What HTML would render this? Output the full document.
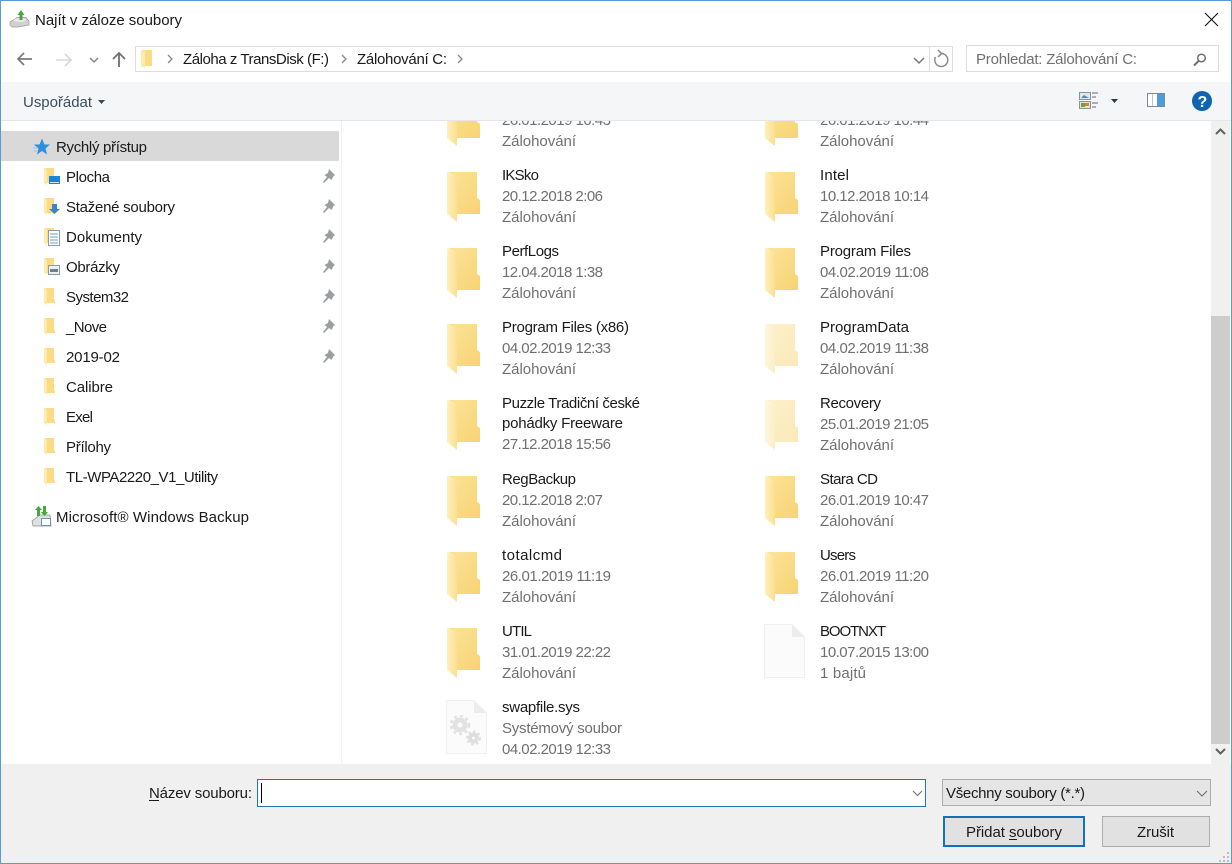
<!DOCTYPE html>
<html lang="cs"><head><meta charset="utf-8"><title>Najít v záloze soubory</title>
<style>
html,body{margin:0;padding:0;background:#fff;width:1232px;height:864px;overflow:hidden}
svg{display:block}
text{font-family:"Liberation Sans",sans-serif;font-size:15px;fill:#1a1a1a}
.g{fill:#707070}
</style></head><body>
<svg width="1232" height="864" viewBox="0 0 1232 864" xmlns="http://www.w3.org/2000/svg">
<defs>
<clipPath id="lst"><rect x="342" y="121" width="869" height="643"/></clipPath>
<linearGradient id="b" x1="0" y1="0" x2="1" y2="1"><stop offset="0" stop-color="#fce49a"/><stop offset="1" stop-color="#f7d374"/></linearGradient>
<linearGradient id="fl" x1="0" y1="0" x2="1" y2="0"><stop offset="0" stop-color="#fef0bd"/><stop offset="1" stop-color="#fbdf8f"/></linearGradient>
<g id="fo">
  <path d="M1 0H30V26L33 28V42H10V6Z" fill="url(#b)"/>
  <path d="M0 0L10 6V50L0 42Z" fill="url(#fl)"/>
</g>
<g id="fs">
  <path d="M1 0H10V12L11 13V15H3Z" fill="#fbdb84"/>
  <path d="M0 0L3 1V17L0 15Z" fill="#fdeaad"/>
</g>
<path id="pin" d="M8 0L14 6L12.500 7L10.500 11L8 9L3 14L2 13L6 8L3.500 6L7 4Z" fill="#9a9da1"/>
</defs>

<rect width="1232" height="864" fill="#fff"/>

<!-- title bar -->
<path d="M10 22L17 17.500H26L29 21V25L18 27H12L10 25Z" fill="#cfd1cf" stroke="#9a9c9a" stroke-width=".7"/>
<ellipse cx="20" cy="20" rx="6" ry="2" fill="#e8e9e8"/>
<path d="M19.500 20V15H17.500L21 10L24.500 15H22.500V20Z" fill="#4aa53f"/>
<text x="35" y="25" textLength="147">Najít v záloze soubory</text>
<path d="M1205 13L1218 26M1218 13L1205 26" stroke="#111" stroke-width="1.100" fill="none"/>

<!-- nav -->
<path d="M32 59H18M24 53L18 59L24 65" stroke="#7a7a7a" stroke-width="1.700" fill="none"/>
<path d="M56 60H71M65 54L71 60L65 66" stroke="#d8d8d8" stroke-width="1.600" fill="none"/>
<path d="M90 58L94 62L98 58" stroke="#888" stroke-width="1.500" fill="none"/>
<path d="M119 67V53M113 59L119 53L125 59" stroke="#707070" stroke-width="1.800" fill="none"/>

<!-- address -->
<rect x="135.500" y="46.500" width="817" height="25" fill="#fff" stroke="#dcdcdc"/>
<path d="M929.500 47V71" stroke="#dcdcdc"/>
<path d="M142 50H152V66H145Z" fill="#fbdb84"/><path d="M141 50L145 51V68L141 66Z" fill="#fdeaad"/>
<path d="M168 55L172 59L168 63" stroke="#888" stroke-width="1.300" fill="none"/>
<text x="183" y="64" textLength="146">Záloha z TransDisk (F:)</text>
<path d="M342 55L346 59L342 63" stroke="#888" stroke-width="1.300" fill="none"/>
<text x="357" y="64" textLength="90">Zálohování C:</text>
<path d="M458 55L462 59L458 63" stroke="#888" stroke-width="1.300" fill="none"/>
<path d="M914 58L919 63L924 58" stroke="#777" stroke-width="1.500" fill="none"/>
<path d="M941 53.500A6.500 6.500 0 1 1 935.500 57" stroke="#8a8a8a" stroke-width="1.500" fill="none"/>
<path d="M938 50L941.500 53.500L938 57" stroke="#8a8a8a" stroke-width="1.500" fill="none"/>

<!-- search -->
<rect x="966.500" y="45.500" width="252" height="26" fill="#fff" stroke="#dcdcdc"/>
<text x="976" y="64" textLength="161" class="g">Prohledat: Zálohování C:</text>
<circle cx="1201.500" cy="58" r="3.800" fill="none" stroke="#707070" stroke-width="1.500"/>
<path d="M1198.500 61L1194 65.500" stroke="#707070" stroke-width="2"/>

<!-- toolbar -->
<rect x="1" y="82" width="1230" height="38" fill="#f5f6f7"/>
<rect x="1" y="120" width="1230" height="1" fill="#e6e6e6"/>
<text x="23" y="107" textLength="69" style="fill:#3b4d63">Uspořádat</text>
<path d="M98 100H105L101.500 104Z" fill="#33475f"/>
<rect x="1079.500" y="92.500" width="11" height="7" fill="#dfe9f2" stroke="#8b9199"/>
<path d="M1081 98L1084 95L1089 98Z" fill="#5c86a8"/>
<rect x="1079.500" y="101.500" width="11" height="7" fill="#e8e6c0" stroke="#8b9199"/>
<path d="M1081 103H1085V107H1081Z" fill="#7d9a4c"/><path d="M1085 103H1089V106H1085Z" fill="#c68a3c"/>
<path d="M1092 93H1098M1092 97H1096M1092 103H1098M1092 107H1096" stroke="#667" stroke-width="1"/>
<path d="M1111 99H1118L1114.500 103Z" fill="#26384f"/>
<rect x="1147.500" y="93.500" width="17" height="13" fill="#fff" stroke="#7f8a95"/>
<rect x="1157" y="94" width="7" height="12" fill="#4a9be0"/>
<rect x="1152" y="94" width="1" height="12" fill="#b8c0c8"/>
<circle cx="1202" cy="101" r="10" fill="#0d65b1"/>
<text x="1197.500" y="107" style="fill:#fff;font-size:16px;font-weight:bold">?</text>

<!-- sidebar -->
<rect x="1" y="131" width="338" height="30" fill="#d9d9d9"/>
<rect x="341" y="121" width="1" height="643" fill="#f2f2f2"/>
<path d="M42 138.500L44.500 144.500H50L45.500 148.500L47 154.500L42 151L37 154.500L38.500 148.500L34 144.500H39.500Z" fill="#2f8fdf"/>
<path d="M33 148H37M34 151H37" stroke="#8cc4ee" stroke-width="1"/>
<text x="56" y="152" textLength="91">Rychlý přístup</text>

<use href="#fs" x="44" y="168"/>
<rect x="49" y="176" width="11" height="8" fill="#1a84d8"/><rect x="50" y="182" width="9" height="1" fill="#cfe6f8"/>
<text x="66" y="182" textLength="44">Plocha</text>
<use href="#pin" x="321" y="169"/>

<use href="#fs" x="44" y="198"/>
<path d="M52 204H57V209H60L54.500 214L49 209H52Z" fill="#3f83cf"/>
<text x="66" y="212" textLength="109">Stažené soubory</text>
<use href="#pin" x="321" y="199"/>

<use href="#fs" x="44" y="228"/>
<rect x="48.500" y="230.500" width="11" height="15" fill="#fff" stroke="#8a9aa8"/>
<path d="M50 234H58M50 237H58M50 240H58M50 243H58" stroke="#6f9cc0" stroke-width="1"/>
<text x="66" y="242" textLength="76">Dokumenty</text>
<use href="#pin" x="321" y="229"/>

<use href="#fs" x="44" y="258"/>
<rect x="48.500" y="265.500" width="11" height="9" fill="#eef1f3" stroke="#8a9aa8"/>
<path d="M50 269H58V272H50Z" fill="#6c8092"/>
<text x="66" y="272" textLength="54">Obrázky</text>
<use href="#pin" x="321" y="259"/>

<use href="#fs" x="44" y="288"/><text x="66" y="302" textLength="63">System32</text><use href="#pin" x="321" y="289"/>
<use href="#fs" x="44" y="318"/><text x="66" y="332" textLength="41">_Nove</text><use href="#pin" x="321" y="319"/>
<use href="#fs" x="44" y="348"/><text x="66" y="362" textLength="54">2019-02</text><use href="#pin" x="321" y="349"/>
<use href="#fs" x="44" y="378"/><text x="66" y="392" textLength="47">Calibre</text>
<use href="#fs" x="44" y="408"/><text x="66" y="422" textLength="27">Exel</text>
<use href="#fs" x="44" y="438"/><text x="66" y="452" textLength="45">Přílohy</text>
<use href="#fs" x="44" y="468"/><text x="66" y="482" textLength="152">TL-WPA2220_V1_Utility</text>

<path d="M32 521L40 515H50L51 526H33Z" fill="#dfe1e0" stroke="#8c8f8e" stroke-width=".7"/>
<path d="M37 516V510H35L38.500 506L42 510H40V516Z" fill="#46a83c"/>
<path d="M43 506V512H41L44.500 516L48 512H46V506Z" fill="#46a83c"/>
<rect x="41.500" y="518.500" width="9" height="7" fill="#fff" stroke="#6d93b5"/>
<text x="56" y="522" textLength="193">Microsoft® Windows Backup</text>

<!-- list -->
<g clip-path="url(#lst)">
<use href="#fo" x="447" y="96"/><use href="#fo" x="765" y="96"/>
<text x="502" y="125" textLength="109" class="g">26.01.2019 10:43</text>
<text x="502" y="146" textLength="74" class="g">Zálohování</text>
<text x="820" y="125" textLength="109" class="g">26.01.2019 10:44</text>
<text x="820" y="146" textLength="74" class="g">Zálohování</text>
</g>

<use href="#fo" x="447" y="172"/>
<text x="502" y="180" textLength="37">IKSko</text>
<text x="502" y="201" textLength="101" class="g">20.12.2018 2:06</text>
<text x="502" y="222" textLength="74" class="g">Zálohování</text>
<use href="#fo" x="765" y="172"/>
<text x="820" y="180" textLength="29">Intel</text>
<text x="820" y="201" textLength="109" class="g">10.12.2018 10:14</text>
<text x="820" y="222" textLength="74" class="g">Zálohování</text>

<use href="#fo" x="447" y="248"/>
<text x="502" y="256" textLength="57">PerfLogs</text>
<text x="502" y="277" textLength="101" class="g">12.04.2018 1:38</text>
<text x="502" y="298" textLength="74" class="g">Zálohování</text>
<use href="#fo" x="765" y="248"/>
<text x="820" y="256" textLength="91">Program Files</text>
<text x="820" y="277" textLength="109" class="g">04.02.2019 11:08</text>
<text x="820" y="298" textLength="74" class="g">Zálohování</text>

<use href="#fo" x="447" y="324"/>
<text x="502" y="332" textLength="127">Program Files (x86)</text>
<text x="502" y="353" textLength="109" class="g">04.02.2019 12:33</text>
<text x="502" y="374" textLength="74" class="g">Zálohování</text>
<use href="#fo" x="765" y="324" opacity=".5"/>
<text x="820" y="332" textLength="89">ProgramData</text>
<text x="820" y="353" textLength="109" class="g">04.02.2019 11:38</text>
<text x="820" y="374" textLength="74" class="g">Zálohování</text>

<use href="#fo" x="447" y="400"/>
<text x="502" y="408" textLength="138">Puzzle Tradiční české</text>
<text x="502" y="428" textLength="121">pohádky Freeware</text>
<text x="502" y="449" textLength="109" class="g">27.12.2018 15:56</text>
<use href="#fo" x="765" y="400" opacity=".5"/>
<text x="820" y="408" textLength="61">Recovery</text>
<text x="820" y="429" textLength="109" class="g">25.01.2019 21:05</text>
<text x="820" y="450" textLength="74" class="g">Zálohování</text>

<use href="#fo" x="447" y="476"/>
<text x="502" y="484" textLength="74">RegBackup</text>
<text x="502" y="505" textLength="101" class="g">20.12.2018 2:07</text>
<text x="502" y="526" textLength="74" class="g">Zálohování</text>
<use href="#fo" x="765" y="476"/>
<text x="820" y="484" textLength="58">Stara CD</text>
<text x="820" y="505" textLength="109" class="g">26.01.2019 10:47</text>
<text x="820" y="526" textLength="74" class="g">Zálohování</text>

<use href="#fo" x="447" y="552"/>
<text x="502" y="560" textLength="60">totalcmd</text>
<text x="502" y="581" textLength="109" class="g">26.01.2019 11:19</text>
<text x="502" y="602" textLength="74" class="g">Zálohování</text>
<use href="#fo" x="765" y="552"/>
<text x="820" y="560" textLength="36">Users</text>
<text x="820" y="581" textLength="109" class="g">26.01.2019 11:20</text>
<text x="820" y="602" textLength="74" class="g">Zálohování</text>

<use href="#fo" x="447" y="628"/>
<text x="502" y="636" textLength="30">UTIL</text>
<text x="502" y="657" textLength="109" class="g">31.01.2019 22:22</text>
<text x="502" y="678" textLength="74" class="g">Zálohování</text>
<path d="M764.500 624.500H792L804.500 637V677.500H764.500Z" fill="#fbfbfb" stroke="#f0f0f0"/>
<path d="M792 625V637H804Z" fill="#ececec"/>
<text x="820" y="636" textLength="66">BOOTNXT</text>
<text x="820" y="657" textLength="109" class="g">10.07.2015 13:00</text>
<text x="820" y="678" textLength="46" class="g">1 bajtů</text>

<path d="M446.500 700.500H474L486.500 713V753.500H446.500Z" fill="#fbfbfb" stroke="#f0f0f0"/>
<path d="M474 701V713H486Z" fill="#ececec"/>
<circle cx="460" cy="725" r="5" fill="none" stroke="#e2e2e2" stroke-width="5"/>
<circle cx="460" cy="725" r="9" fill="none" stroke="#e2e2e2" stroke-width="2.500" stroke-dasharray="3 3"/>
<circle cx="473.500" cy="738" r="3.500" fill="none" stroke="#dedede" stroke-width="4"/>
<circle cx="473.500" cy="738" r="6.500" fill="none" stroke="#dedede" stroke-width="2" stroke-dasharray="2.500 2.500"/>
<text x="502" y="712" textLength="78">swapfile.sys</text>
<text x="502" y="733" textLength="120" class="g">Systémový soubor</text>
<text x="502" y="754" textLength="109" class="g">04.02.2019 12:33</text>

<!-- scrollbar -->
<rect x="1211" y="121" width="19" height="643" fill="#f0f0f0"/>
<rect x="1211" y="316" width="19" height="428" fill="#cdcdcd"/>
<path d="M1216 134L1220.500 129.500L1225 134" stroke="#606060" stroke-width="2" fill="none"/>

<!-- footer -->
<rect x="1" y="764" width="1230" height="99" fill="#f0f0f0"/>
<path d="M1216 749L1220.500 753.500L1225 749" stroke="#606060" stroke-width="2" fill="none"/>
<text x="149" y="798" textLength="103">Název souboru:</text>
<rect x="149" y="800" width="10" height="1" fill="#1a1a1a"/>
<rect x="257.500" y="779.500" width="668" height="27" fill="#fff" stroke="#2277b0"/>
<rect x="261" y="783" width="1" height="20" fill="#000"/>
<path d="M913 791L917.500 795.500L922 791" stroke="#6a6a6a" stroke-width="1" fill="none"/>
<rect x="942.500" y="779.500" width="268" height="26" fill="#e5e5e5" stroke="#acacac"/>
<text x="946" y="798" textLength="139">Všechny soubory (*.*)</text>
<path d="M1197 791L1202 796L1207 791" stroke="#6a6a6a" stroke-width="1" fill="none"/>
<rect x="944" y="817" width="140" height="29" fill="#e1e1e1" stroke="#1272b5" stroke-width="2"/>
<text x="966" y="837" textLength="96">Přidat soubory</text>
<rect x="1009" y="839" width="8" height="1" fill="#1a1a1a"/>
<rect x="1102.500" y="816.500" width="107" height="30" fill="#e1e1e1" stroke="#adadad"/>
<text x="1137" y="837" textLength="37">Zrušit</text>
<path d="M1227 852h2v2h-2zM1223 856h2v2h-2zM1227 856h2v2h-2zM1219 860h2v2h-2zM1223 860h2v2h-2zM1227 860h2v2h-2z" fill="#bdbdbd"/>

<!-- window border -->
<rect x=".5" y=".5" width="1231" height="863" fill="none" stroke="#5b9bd5"/>
</svg>
</body></html>
